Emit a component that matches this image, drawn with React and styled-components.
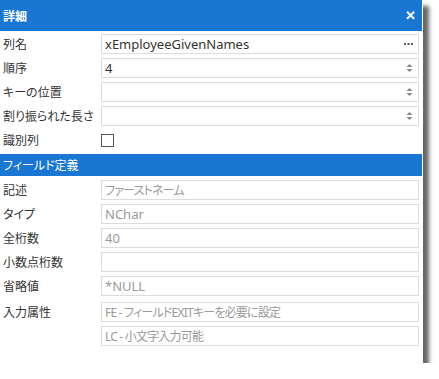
import React from 'react'
import styled, { createGlobalStyle } from 'styled-components'

const Global = createGlobalStyle`
  body {
    margin: 0;
    background: #fff;
    font-family: "Noto Sans", "Noto Sans CJK JP", sans-serif;
    font-feature-settings: "palt";
  }
`

const Panel = styled.div`
  width: 423px;
  height: 363px;
  background: #fff;
  box-shadow: 6px 6px 4px rgba(0, 0, 0, 0.6);
  display: flex;
  flex-direction: column;
`

const Header = styled.div`
  height: 31px;
  width: 422px;
  background: #1976d2;
  color: #fff;
  display: flex;
  align-items: center;
  justify-content: space-between;
  padding: 0 6px 0 3px;
  box-sizing: border-box;
  font-size: 12px;
  font-weight: bold;
`

const Close = styled.span`
  font-size: 13px;
  font-weight: bold;
  line-height: 1;
`

const Body = styled.div`
  display: flex;
  flex-direction: column;
  gap: 4px;
  padding-top: 3px;
`

const Row = styled.div`
  display: grid;
  grid-template-columns: 101px 318px;
  align-items: center;
  height: 20px;
  margin-top: ${p => p.$extra || 0}px;
`

const Label = styled.div`
  padding-left: 3px;
  font-size: 12px;
  color: #333;
`

const Field = styled.div`
  height: 20px;
  box-sizing: border-box;
  border: 1px solid #dcdcdc;
  display: flex;
  align-items: center;
  justify-content: space-between;
  padding: 0 5px 0 3px;
  font-size: 13px;
  white-space: nowrap;
  color: ${p => (p.$muted ? '#9a9a9a' : '#333')};
`

const Jp = styled.span`
  font-size: 12px;
  letter-spacing: -0.8px;
`

const Check = styled.div`
  width: 13px;
  height: 13px;
  box-sizing: border-box;
  border: 1px solid #555;
`

const Section = styled.div`
  height: 22px;
  width: 422px;
  background: #1976d2;
  color: #fff;
  font-size: 12px;
  display: flex;
  align-items: center;
  padding-left: 3px;
  box-sizing: border-box;
`

const Dots = () => (
  <svg width="9" height="3" viewBox="0 0 9 3">
    <rect x="0" y="0" width="2" height="2" fill="#555" />
    <rect x="3.5" y="0" width="2" height="2" fill="#555" />
    <rect x="7" y="0" width="2" height="2" fill="#555" />
  </svg>
)

const Spin = () => (
  <svg width="7" height="10" viewBox="0 0 7 10">
    <polygon points="0.5,4 3.5,1 6.5,4" fill="#888" />
    <polygon points="0.5,6 6.5,6 3.5,9" fill="#888" />
  </svg>
)

const App = () => {
  return (
    <>
      <Global />
      <Panel>
        <Header>
          <span>詳細</span>
          <Close>✕</Close>
        </Header>
        <Body>
          <Row>
            <Label>列名</Label>
            <Field>xEmployeeGivenNames<Dots /></Field>
          </Row>
          <Row>
            <Label>順序</Label>
            <Field>4<Spin /></Field>
          </Row>
          <Row>
            <Label>キーの位置</Label>
            <Field><span /><Spin /></Field>
          </Row>
          <Row>
            <Label>割り振られた長さ</Label>
            <Field><span /><Spin /></Field>
          </Row>
          <Row>
            <Label>識別列</Label>
            <Check />
          </Row>
          <Section>フィールド定義</Section>
          <Row>
            <Label>記述</Label>
            <Field $muted><Jp>ファーストネーム</Jp></Field>
          </Row>
          <Row>
            <Label>タイプ</Label>
            <Field $muted>NChar</Field>
          </Row>
          <Row>
            <Label>全桁数</Label>
            <Field $muted>40</Field>
          </Row>
          <Row>
            <Label>小数点桁数</Label>
            <Field $muted />
          </Row>
          <Row>
            <Label>省略値</Label>
            <Field $muted>*NULL</Field>
          </Row>
          <Row $extra={2}>
            <Label>入力属性</Label>
            <Field $muted><Jp>FE - フィールドEXITキーを必要に設定</Jp></Field>
          </Row>
          <Row>
            <Label />
            <Field $muted><Jp>LC - 小文字入力可能</Jp></Field>
          </Row>
        </Body>
      </Panel>
    </>
  )
}

export default App
